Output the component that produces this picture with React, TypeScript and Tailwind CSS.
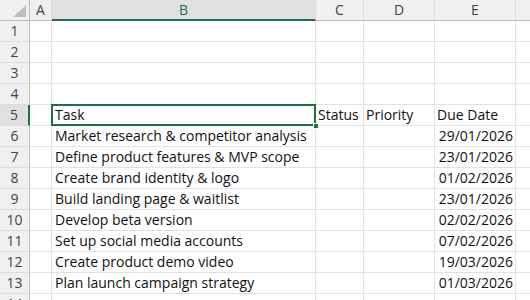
import React from 'react';

const rows: { task: string; due: string }[] = [
  { task: '', due: '' },
  { task: '', due: '' },
  { task: '', due: '' },
  { task: '', due: '' },
  { task: 'Task', due: 'Due Date' },
  { task: 'Market research & competitor analysis', due: '29/01/2026' },
  { task: 'Define product features & MVP scope', due: '23/01/2026' },
  { task: 'Create brand identity & logo', due: '01/02/2026' },
  { task: 'Build landing page & waitlist', due: '23/01/2026' },
  { task: 'Develop beta version', due: '02/02/2026' },
  { task: 'Set up social media accounts', due: '07/02/2026' },
  { task: 'Create product demo video', due: '19/03/2026' },
  { task: 'Plan launch campaign strategy', due: '01/03/2026' },
  { task: '', due: '' },
];

const cols = 'grid grid-cols-[30px_22px_264px_48px_71px_81px_1fr]';
const cell = 'h-[21px] border-r border-b border-[#e1e1e1] overflow-visible whitespace-nowrap';

export default function App() {
  return (
    <div
      className="w-[530px] h-[300px] overflow-hidden bg-white text-[#111] text-[14px]"
      style={{ fontFamily: '"Open Sans", sans-serif' }}
    >
      {/* column headers */}
      <div className={`${cols} h-[21px] text-[#444] text-[14px]`}>
        <div className="relative bg-[#f0f0f0] border-r border-b border-[#bdbdbd]">
          <svg className="absolute left-[13px] top-[5px]" width="13" height="12" viewBox="0 0 13 12">
            <polygon points="13,0 13,12 0,12" fill="#bfbfbf" />
          </svg>
        </div>
        <div className="bg-[#f0f0f0] border-r border-b border-r-[#dadada] border-b-[#bdbdbd] flex items-end justify-center leading-[20px]">A</div>
        <div className="bg-[#e0e0e0] border-r border-r-[#dadada] border-b-2 border-b-[#1e7145] text-[#1e7145] flex items-end justify-center leading-[19px]">B</div>
        <div className="bg-[#f0f0f0] border-r border-b border-r-[#dadada] border-b-[#bdbdbd] flex items-end justify-center leading-[20px]">C</div>
        <div className="bg-[#f0f0f0] border-r border-b border-r-[#dadada] border-b-[#bdbdbd] flex items-end justify-center leading-[20px]">D</div>
        <div className="bg-[#f0f0f0] border-r border-b border-r-[#dadada] border-b-[#bdbdbd] flex items-end justify-center leading-[20px]">E</div>
        <div className="bg-[#f0f0f0] border-b border-[#bdbdbd]" />
      </div>

      {rows.map((r, i) => {
        const n = i + 1;
        const sel = n === 5;
        return (
          <div key={n} className={cols}>
            <div
              className={
                sel
                  ? 'h-[21px] bg-[#e0e0e0] border-r-2 border-r-[#1e7145] border-b border-b-[#dcdcdc] text-[#444] text-[14px] flex items-end justify-center leading-[20px]'
                  : 'h-[21px] bg-[#f0f0f0] border-r border-r-[#bdbdbd] border-b border-b-[#dcdcdc] text-[#444] text-[14px] flex items-end justify-center leading-[20px]'
              }
            >
              {n}
            </div>
            <div className={cell} />
            <div className={`${cell} relative pl-[3px] leading-[20px]`}>
              {r.task}
              {sel && (
                <>
                  <div className="absolute -left-px -top-px -right-px -bottom-px border-2 border-[#1e7145]" />
                  <div className="absolute right-[-4px] bottom-[-4px] w-[6px] h-[6px] bg-[#1e7145] border border-white z-10" />
                </>
              )}
            </div>
            <div className={`${cell} pl-[2px] leading-[20px]`}>{sel ? 'Status' : ''}</div>
            <div className={`${cell} pl-[2px] leading-[20px]`}>{sel ? 'Priority' : ''}</div>
            <div className={`${cell} leading-[20px] ${sel ? 'pl-[2px]' : 'text-right pr-[2px]'}`}>{r.due}</div>
            <div className="h-[21px] border-b border-[#e1e1e1]" />
          </div>
        );
      })}
    </div>
  );
}
